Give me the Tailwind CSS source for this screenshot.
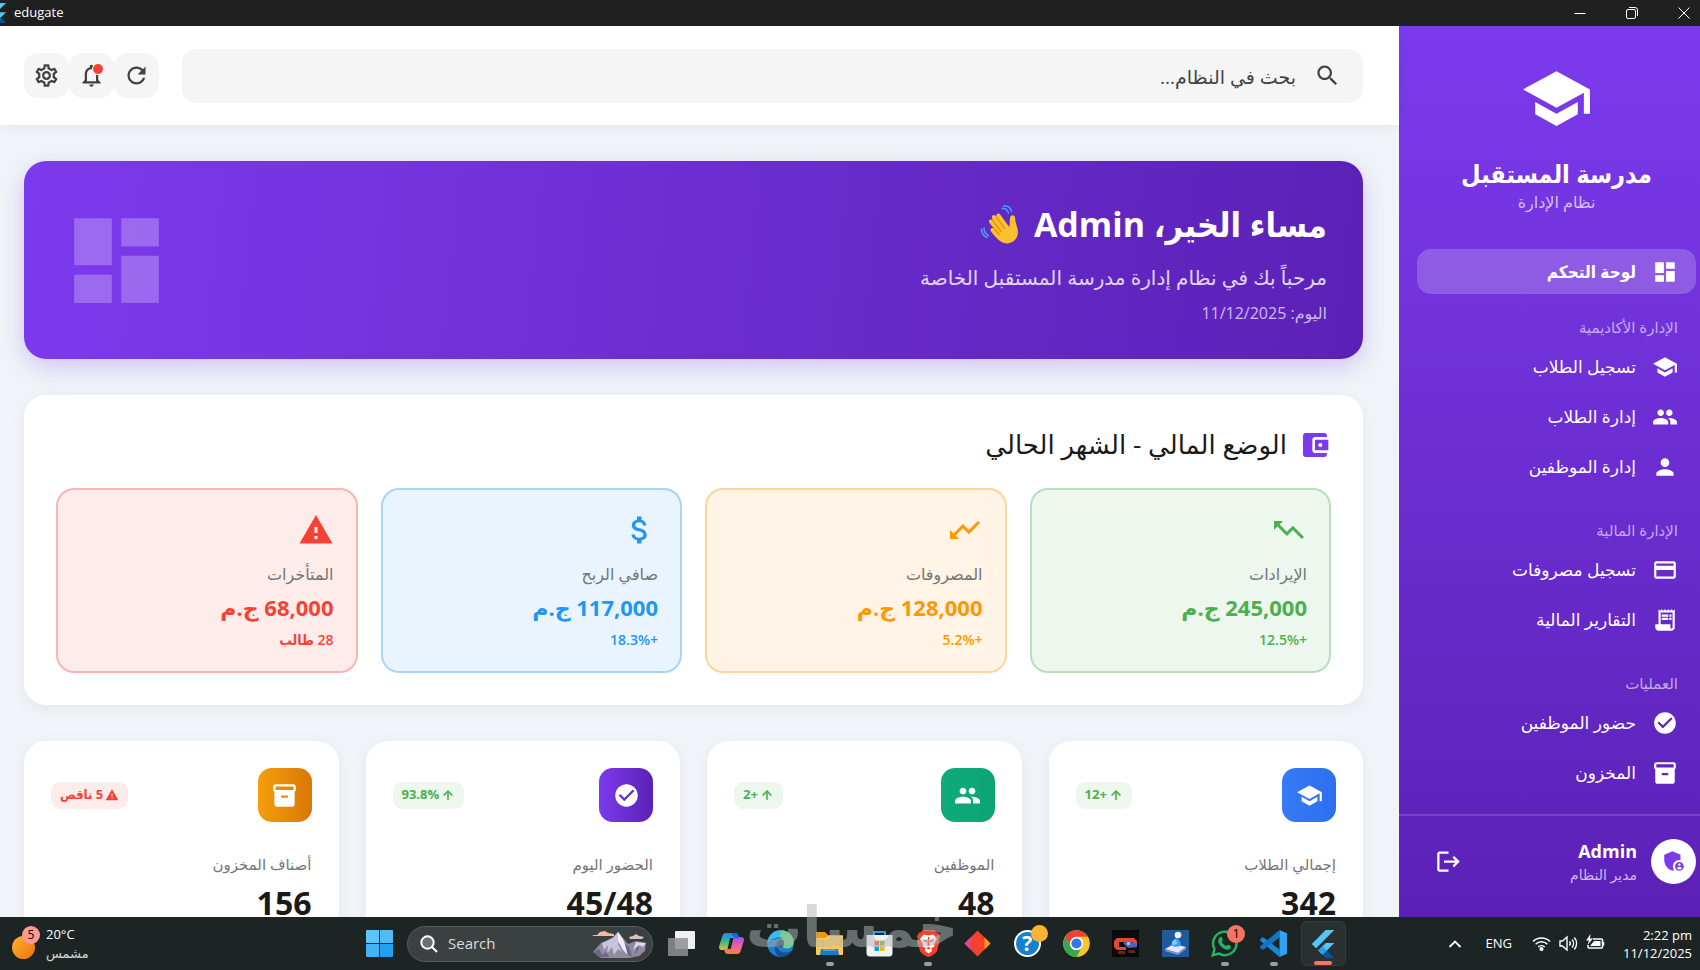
<!doctype html>
<html lang="ar" dir="rtl">
    <head>
        <meta charset="UTF-8" />
        <meta name="viewport" content="width=device-width, initial-scale=1.0" />
        <title>edugate</title>
        <script src="https://cdn.jsdelivr.net/npm/@tailwindcss/browser@4"></script>
    </head>
    <body class="font-['Open_Sans','DejaVu_Sans',sans-serif] text-[#1a1a1a]">
        <!-- icon set -->
        <svg class="hidden">
            <symbol id="school" viewBox="0 0 24 24"><path d="M5 13.18v4L12 21l7-3.82v-4L12 17l-7-3.82zM12 3L1 9l11 6 9-4.91V17h2V9L12 3z" /></symbol>
            <symbol id="dashboard" viewBox="0 0 24 24"><path d="M3 13h8V3H3v10zm0 8h8v-6H3v6zm10 0h8V11h-8v10zm0-18v6h8V3h-8z" /></symbol>
            <symbol id="people" viewBox="0 0 24 24"><path d="M16 11c1.66 0 2.99-1.34 2.99-3S17.66 5 16 5c-1.66 0-3 1.34-3 3s1.34 3 3 3zm-8 0c1.66 0 2.99-1.34 2.99-3S9.66 5 8 5C6.34 5 5 6.34 5 8s1.34 3 3 3zm0 2c-2.33 0-7 1.17-7 3.5V19h14v-2.5c0-2.33-4.67-3.5-7-3.5zm8 0c-.29 0-.62.02-.97.05 1.16.84 1.97 1.97 1.97 3.45V19h6v-2.5c0-2.33-4.67-3.5-7-3.5z" /></symbol>
            <symbol id="person" viewBox="0 0 24 24"><path d="M12 12c2.21 0 4-1.79 4-4s-1.79-4-4-4-4 1.79-4 4 1.79 4 4 4zm0 2c-2.67 0-8 1.34-8 4v2h16v-2c0-2.66-5.33-4-8-4z" /></symbol>
            <symbol id="card" viewBox="0 0 24 24"><path d="M20 4H4c-1.11 0-1.99.89-1.99 2L2 18c0 1.11.89 2 2 2h16c1.11 0 2-.89 2-2V6c0-1.11-.89-2-2-2zm0 14H4v-6h16v6zm0-10H4V6h16v2z" /></symbol>
            <symbol id="receipt" viewBox="0 0 24 24"><path d="M19.5 3.5L18 2l-1.5 1.5L15 2l-1.5 1.5L12 2l-1.5 1.5L9 2 7.5 3.5 6 2v14H3v3c0 1.66 1.34 3 3 3h12c1.66 0 3-1.34 3-3V2l-1.5 1.5zM19 19c0 .55-.45 1-1 1s-1-.45-1-1v-3H8V5h11v14zM9 7h6v2H9zM16 7h2v2h-2zM9 10h6v2H9zM16 10h2v2h-2z" /></symbol>
            <symbol id="check" viewBox="0 0 24 24"><path d="M12 2C6.48 2 2 6.48 2 12s4.48 10 10 10 10-4.48 10-10S17.52 2 12 2zm-2 15l-5-5 1.41-1.41L10 14.17l7.59-7.59L19 8l-9 9z" /></symbol>
            <symbol id="inventory" viewBox="0 0 24 24"><path d="M20 2H4c-1 0-2 .9-2 2v3.01c0 .72.43 1.34 1 1.69V20c0 1.1 1.1 2 2 2h14c.9 0 2-.9 2-2V8.7c.57-.35 1-.97 1-1.69V4c0-1.1-1-2-2-2zm-5 12H9v-2h6v2zm5-7H4V4h16v3z" /></symbol>
            <symbol id="admin" viewBox="0 0 24 24"><path d="M17 11c.34 0 .67.04 1 .09V6.27L10.5 3 3 6.27v4.91c0 4.54 3.2 8.79 7.5 9.82.55-.13 1.08-.32 1.6-.55-.69-.98-1.1-2.17-1.1-3.45 0-3.31 2.69-6 6-6z" /><path d="M17 13c-2.21 0-4 1.79-4 4s1.79 4 4 4 4-1.79 4-4-1.79-4-4-4zm0 1.38c.62 0 1.12.51 1.12 1.12s-.51 1.12-1.12 1.12-1.12-.51-1.12-1.12.5-1.12 1.12-1.12zm0 5.37c-.93 0-1.74-.46-2.24-1.17.05-.72 1.51-1.08 2.24-1.08s2.19.36 2.24 1.08c-.5.71-1.31 1.17-2.24 1.17z" /></symbol>
            <symbol id="logout" viewBox="0 0 24 24"><path d="M17 7l-1.41 1.41L18.17 11H8v2h10.17l-2.58 2.58L17 17l5-5zM4 5h8V3H4c-1.1 0-2 .9-2 2v14c0 1.1.9 2 2 2h8v-2H4V5z" /></symbol>
            <symbol id="refresh" viewBox="0 0 24 24"><path d="M17.65 6.35C16.2 4.9 14.21 4 12 4c-4.42 0-7.99 3.58-7.99 8s3.57 8 7.99 8c3.73 0 6.84-2.55 7.73-6h-2.08c-.82 2.33-3.04 4-5.65 4-3.31 0-6-2.69-6-6s2.69-6 6-6c1.66 0 3.14.69 4.22 1.78L13 11h7V4l-2.35 2.35z" /></symbol>
            <symbol id="bell" viewBox="0 0 24 24"><path d="M12 22c1.1 0 2-.9 2-2h-4c0 1.1.9 2 2 2zm6-6v-5c0-3.07-1.63-5.64-4.5-6.32V4c0-.83-.67-1.5-1.5-1.5s-1.5.67-1.5 1.5v.68C7.64 5.36 6 7.92 6 11v5l-2 2v1h16v-1l-2-2zm-2 1H8v-6c0-2.48 1.51-4.5 4-4.5s4 2.02 4 4.5v6z" /></symbol>
            <symbol id="settings" viewBox="0 0 24 24"><path d="M19.43 12.98c.04-.32.07-.64.07-.98 0-.34-.03-.66-.07-.98l2.11-1.65c.19-.15.24-.42.12-.64l-2-3.46c-.09-.16-.26-.25-.44-.25-.06 0-.12.01-.17.03l-2.49 1c-.52-.4-1.08-.73-1.69-.98l-.38-2.65C14.46 2.18 14.25 2 14 2h-4c-.25 0-.46.18-.49.42l-.38 2.65c-.61.25-1.17.59-1.69.98l-2.49-1c-.06-.02-.12-.03-.18-.03-.17 0-.34.09-.43.25l-2 3.46c-.13.22-.07.49.12.64l2.11 1.65c-.04.32-.07.65-.07.98 0 .33.03.66.07.98l-2.11 1.65c-.19.15-.24.42-.12.64l2 3.46c.09.16.26.25.44.25.06 0 .12-.01.17-.03l2.49-1c.52.4 1.08.73 1.69.98l.38 2.65c.03.24.24.42.49.42h4c.25 0 .46-.18.49-.42l.38-2.65c.61-.25 1.17-.59 1.69-.98l2.49 1c.06.02.12.03.18.03.17 0 .34-.09.43-.25l2-3.46c.12-.22.07-.49-.12-.64l-2.11-1.65zm-1.98-1.71c.04.31.05.52.05.73 0 .21-.02.43-.05.73l-.14 1.13.89.7 1.08.84-.7 1.21-1.27-.51-1.04-.42-.9.68c-.43.32-.84.56-1.25.73l-1.06.43-.16 1.13-.2 1.35h-1.4l-.19-1.35-.16-1.13-1.06-.43c-.43-.18-.83-.41-1.23-.71l-.91-.7-1.06.43-1.27.51-.7-1.21 1.08-.84.89-.7-.14-1.13c-.03-.31-.05-.54-.05-.74s.02-.43.05-.73l.14-1.13-.89-.7-1.08-.84.7-1.21 1.27.51 1.04.42.9-.68c.43-.32.84-.56 1.25-.73l1.06-.43.16-1.13.2-1.35h1.39l.19 1.35.16 1.13 1.06.43c.43.18.83.41 1.23.71l.91.7 1.06-.43 1.27-.51.7 1.21-1.07.85-.89.7.14 1.13zM12 8c-2.21 0-4 1.79-4 4s1.79 4 4 4 4-1.79 4-4-1.79-4-4-4zm0 6c-1.1 0-2-.9-2-2s.9-2 2-2 2 .9 2 2-.9 2-2 2z" /></symbol>
            <symbol id="search" viewBox="0 0 24 24"><path d="M15.5 14h-.79l-.28-.27C15.41 12.59 16 11.11 16 9.5 16 5.91 13.09 3 9.5 3S3 5.91 3 9.5 5.91 16 9.5 16c1.61 0 3.09-.59 4.23-1.57l.27.28v.79l5 4.99L20.49 19l-4.99-5zm-6 0C7.01 14 5 11.99 5 9.5S7.01 5 9.5 5 14 7.01 14 9.5 11.99 14 9.5 14z" /></symbol>
            <symbol id="wallet" viewBox="0 0 24 24"><path d="M21 18v1c0 1.1-.9 2-2 2H5c-1.11 0-2-.9-2-2V5c0-1.1.89-2 2-2h14c1.1 0 2 .9 2 2v1h-9c-1.11 0-2 .9-2 2v8c0 1.1.89 2 2 2h9zm-9-2h10V8H12v8zm4-2.5c-.83 0-1.5-.67-1.5-1.5s.67-1.5 1.5-1.5 1.5.67 1.5 1.5-.67 1.5-1.5 1.5z" /></symbol>
            <symbol id="trend-up" viewBox="0 0 24 24"><path transform="matrix(-1 0 0 1 24 0)" d="M16 6l2.29 2.29-4.88 4.88-4-4L2 16.59 3.41 18l6-6 4 4 6.3-6.29L22 12V6z" /></symbol>
            <symbol id="trend-down" viewBox="0 0 24 24"><path transform="matrix(-1 0 0 1 24 0)" d="M16 18l2.29-2.29-4.88-4.88-4 4L2 7.41 3.41 6l6 6 4-4 6.3 6.29L22 12v6z" /></symbol>
            <symbol id="money" viewBox="0 0 24 24"><path d="M11.8 10.9c-2.27-.59-3-1.2-3-2.15 0-1.09 1.01-1.85 2.7-1.85 1.78 0 2.44.85 2.5 2.1h2.21c-.07-1.72-1.12-3.3-3.21-3.81V3h-3v2.16c-1.94.42-3.5 1.68-3.5 3.61 0 2.31 1.91 3.46 4.7 4.13 2.5.6 3 1.48 3 2.41 0 .69-.49 1.79-2.7 1.79-2.06 0-2.87-.92-2.98-2.1h-2.2c.12 2.19 1.76 3.42 3.68 3.83V21h3v-2.15c1.95-.37 3.5-1.5 3.5-3.55 0-2.84-2.43-3.81-4.7-4.4z" /></symbol>
            <symbol id="warning" viewBox="0 0 24 24"><path d="M1 21h22L12 2 1 21zm12-3h-2v-2h2v2zm0-4h-2v-4h2v4z" /></symbol>
            <symbol id="arrow-up" viewBox="0 0 24 24"><path stroke="currentColor" d="M4 12l1.41 1.41L11 7.83V20h2V7.83l5.58 5.59L20 12l-8-8-8 8z" /></symbol>
            <symbol id="flutter" viewBox="0 0 24 24">
                <path fill="#54c5f8" d="M14.3 0L2.4 12l3.7 3.7L21.7 0z" />
                <path fill="#54c5f8" d="M14.4 11.1L7.9 17.5l3.7 3.7 10.1-10.1z" />
                <path fill="#01579b" d="M11.6 21.2l2.8 2.8h7.3l-6.5-6.5z" />
                <path fill="#2b9ee8" d="M7.9 17.5l3.7-3.7 3.6 3.7-3.6 3.7z" />
            </symbol>
        </svg>

        <div class="relative flex h-screen flex-col overflow-hidden">
            <!-- title bar -->
            <div dir="ltr" class="flex h-[26px] shrink-0 items-center bg-[#202020] text-white">
                <svg class="-ml-3 size-5"><use href="#flutter" /></svg>
                <span class="ml-1.5 text-[13px]">edugate</span>
                <div class="ml-auto flex gap-5">
                    <button type="button" aria-label="Minimize" class="flex h-[26px] w-8 items-center justify-center">
                        <svg class="size-3 fill-none stroke-white" viewBox="0 0 12 12"><path d="M.5 6.5h11" /></svg>
                    </button>
                    <button type="button" aria-label="Restore" class="flex h-[26px] w-8 items-center justify-center">
                        <svg class="size-3 fill-none stroke-white" viewBox="0 0 12 12"><rect x=".5" y="2.5" width="9" height="9" rx="1.5" /><path d="M3 .5h6a2.5 2.5 0 0 1 2.500 2.500v6" /></svg>
                    </button>
                    <button type="button" aria-label="Close" class="flex h-[26px] w-8 items-center justify-center">
                        <svg class="size-3 fill-none stroke-white" viewBox="0 0 12 12"><path d="M.5 .5l11 11M11.500 .5l-11 11" /></svg>
                    </button>
                </div>
            </div>

            <div class="flex min-h-0 flex-1">
                <!-- sidebar -->
                <aside class="flex w-[301px] shrink-0 flex-col bg-linear-to-b from-[#7c3aed] to-[#5b21b6] text-white">
                    <div class="flex flex-col items-center pt-9 pr-1 pb-9 pl-[18px]">
                        <svg class="size-[73px] fill-white"><use href="#school" /></svg>
                        <h1 class="mt-5 font-['Open_Sans','DejaVu_Sans_Condensed','DejaVu_Sans',sans-serif] text-[25px] leading-9 font-bold">مدرسة المستقبل</h1>
                        <p class="text-[16px] leading-[22px] text-white/70">نظام الإدارة</p>
                    </div>
                    <nav class="flex min-h-0 flex-1 flex-col overflow-hidden pr-1 pl-[18px]">
                        <a href="#" class="flex h-[45px] shrink-0 items-center gap-4 rounded-[14px] bg-white/20 px-[18px] font-['Open_Sans','DejaVu_Sans_Condensed','DejaVu_Sans',sans-serif] text-[17px] font-bold">
                            <svg class="size-[26px] fill-white"><use href="#dashboard" /></svg>
                            لوحة التحكم
                        </a>
                        <h2 class="mt-[23px] mb-[7px] px-[18px] text-[15px] leading-5 text-white/60">الإدارة الأكاديمية</h2>
                        <div class="flex flex-col gap-[5px] text-[17px]">
                            <a href="#" class="flex h-[45px] items-center gap-4 px-[18px]">
                                <svg class="size-[26px] fill-white"><use href="#school" /></svg>
                                تسجيل الطلاب
                            </a>
                            <a href="#" class="flex h-[45px] items-center gap-4 px-[18px]">
                                <svg class="size-[26px] fill-white"><use href="#people" /></svg>
                                إدارة الطلاب
                            </a>
                            <a href="#" class="flex h-[45px] items-center gap-4 px-[18px]">
                                <svg class="size-[26px] fill-white"><use href="#person" /></svg>
                                إدارة الموظفين
                            </a>
                        </div>
                        <h2 class="mt-[31px] mb-[7px] px-[18px] text-[15px] leading-5 text-white/60">الإدارة المالية</h2>
                        <div class="flex flex-col gap-[5px] text-[17px]">
                            <a href="#" class="flex h-[45px] items-center gap-4 px-[18px]">
                                <svg class="size-[26px] fill-white"><use href="#card" /></svg>
                                تسجيل مصروفات
                            </a>
                            <a href="#" class="flex h-[45px] items-center gap-4 px-[18px]">
                                <svg class="size-[26px] fill-white"><use href="#receipt" /></svg>
                                التقارير المالية
                            </a>
                        </div>
                        <h2 class="mt-[31px] mb-[7px] px-[18px] text-[15px] leading-5 text-white/60">العمليات</h2>
                        <div class="flex flex-col gap-[5px] text-[17px]">
                            <a href="#" class="flex h-[45px] items-center gap-4 px-[18px]">
                                <svg class="size-[26px] fill-white"><use href="#check" /></svg>
                                حضور الموظفين
                            </a>
                            <a href="#" class="flex h-[45px] items-center gap-4 px-[18px]">
                                <svg class="size-[26px] fill-white"><use href="#inventory" /></svg>
                                المخزون
                            </a>
                        </div>
                    </nav>
                    <div class="flex items-center gap-3.5 border-t-2 border-white/15 pt-[21px] pr-1 pb-8 pl-9">
                        <div class="flex size-[45px] items-center justify-center rounded-full bg-white">
                            <svg class="size-[26px] fill-[#7c3aed]"><use href="#admin" /></svg>
                        </div>
                        <div class="pt-1">
                            <p class="text-[18px] leading-5 font-bold">Admin</p>
                            <p class="mt-1 text-[14px] leading-5 text-white/70">مدير النظام</p>
                        </div>
                        <button type="button" aria-label="تسجيل الخروج" class="mr-auto">
                            <svg class="size-[27px] fill-white"><use href="#logout" /></svg>
                        </button>
                    </div>
                </aside>

                <div class="flex min-w-0 flex-1 flex-col bg-[#f0f4f8]">
                    <!-- top bar -->
                    <header class="z-10 flex h-[99px] shrink-0 items-center gap-[23px] bg-white pr-9 pl-6 shadow-[0_2px_12px_rgba(0,0,0,0.05)]">
                        <label class="flex h-[54px] flex-1 items-center gap-[18px] rounded-[14px] bg-[#f5f5f5] px-[22px]">
                            <svg class="size-[27px] fill-[#424242]"><use href="#search" /></svg>
                            <input type="text" placeholder="بحث في النظام..." aria-label="بحث" class="min-w-0 flex-1 pt-1 text-[19px] outline-none placeholder:text-[#424242]" />
                        </label>
                        <div class="flex">
                            <button type="button" aria-label="تحديث" class="flex size-[45px] items-center justify-center rounded-[14px] bg-[#f5f5f5]">
                                <svg class="size-[27px] fill-[#424242]"><use href="#refresh" /></svg>
                            </button>
                            <button type="button" aria-label="الإشعارات" class="relative flex size-[45px] items-center justify-center rounded-[14px] bg-[#f5f5f5]">
                                <svg class="size-[27px] fill-[#424242]"><use href="#bell" /></svg>
                                <span class="absolute top-2.5 right-2.5 size-3 rounded-full border border-white bg-[#f44336]"></span>
                            </button>
                            <button type="button" aria-label="الإعدادات" class="flex size-[45px] items-center justify-center rounded-[14px] bg-[#f5f5f5]">
                                <svg class="size-[27px] fill-[#424242]"><use href="#settings" /></svg>
                            </button>
                        </div>
                    </header>

                    <main class="flex min-h-0 flex-1 flex-col gap-9 overflow-hidden pt-9 pr-9 pl-6">
                        <!-- greeting -->
                        <section class="flex shrink-0 items-center justify-between rounded-[22px] bg-linear-[96deg] from-[#7c3aed] to-[#5b21b6] p-9 text-white shadow-[0_8px_24px_rgba(124,58,237,0.25)]">
                            <div>
                                <h2 class="flex items-center gap-3.5 font-['Open_Sans','DejaVu_Sans_Condensed','DejaVu_Sans',sans-serif] text-[34px] leading-[54px] font-bold">
                                    مساء الخير، Admin
                                    <svg class="size-10" viewBox="0 0 40 40" role="img" aria-label="👋">
                                        <g fill="none" stroke="#42a5f5" stroke-width="1.500" stroke-linecap="round">
                                            <path d="M22 4.500c3-.5 5.500 1.200 6.500 4.500M23.500 1.900c4-.3 7 2 8 5.500M4 24c0 4 1.500 6 4.500 7.500M1.500 25c.2 4 2 7 5.500 8.500" />
                                        </g>
                                        <path fill="#fbc02d" d="M11.500 28c-2.500-2.500.5-5.500 3-3l-5-6c-1.700-2.800 1.600-4.800 3.400-2.500l-.8-2.300c-1-2.800 2-4.500 3.700-2.200l.6.800c-.8-3.200 2.400-4.500 3.900-2l9 12.200c.6-3 .2-5.500.8-9.500.6-3.300 5-2.800 5 .5-.1 5 2.800 9 2.800 14 0 7-5 11.400-11.500 11.400-6 0-11-6.500-14.900-11.400z" />
                                        <path fill="none" stroke="#ef8f00" stroke-width="1.300" stroke-linecap="round" d="M14.500 25l4.500 5.500M13 17l8 10.500M16.500 13l8 11.500" />
                                    </svg>
                                </h2>
                                <p class="mt-[9px] text-[20px] leading-9 text-white/80">مرحباً بك في نظام إدارة مدرسة المستقبل الخاصة</p>
                                <p class="mt-[7px] text-[16px] leading-5 text-white/70">اليوم: 11/12/2025</p>
                            </div>
                            <svg class="size-[113px] fill-white/25"><use href="#dashboard" /></svg>
                        </section>

                        <!-- finance -->
                        <section class="shrink-0 rounded-[22px] bg-white p-8 shadow-[0_4px_16px_rgba(0,0,0,0.05)]">
                            <h2 class="mb-[26px] flex h-[35px] items-center gap-3 text-[26px] font-medium">
                                <svg class="size-8 fill-[#7c3aed]"><use href="#wallet" /></svg>
                                الوضع المالي - الشهر الحالي
                            </h2>
                            <div class="grid grid-cols-4 gap-[23px]">
                                <div class="rounded-[18px] border-2 border-[#4caf50]/40 bg-[#edf7ee] bg-clip-padding p-[22px] text-[#4caf50]">
                                    <svg class="size-9 fill-[#4caf50]"><use href="#trend-up" /></svg>
                                    <p class="mt-[15px] text-[16px] leading-[22px] text-[#757575]">الإيرادات</p>
                                    <p class="mt-[7px] text-[22px] leading-[30px] font-bold">245,000 ج.م</p>
                                    <p class="mt-[9px] font-['Open_Sans','DejaVu_Sans_Condensed','DejaVu_Sans',sans-serif] text-[14px] leading-[18px] font-semibold">+12.5%</p>
                                </div>
                                <div class="rounded-[18px] border-2 border-[#ff9800]/40 bg-[#fff4e5] bg-clip-padding p-[22px] text-[#ff9800]">
                                    <svg class="size-9 fill-[#ff9800]"><use href="#trend-down" /></svg>
                                    <p class="mt-[15px] text-[16px] leading-[22px] text-[#757575]">المصروفات</p>
                                    <p class="mt-[7px] text-[22px] leading-[30px] font-bold">128,000 ج.م</p>
                                    <p class="mt-[9px] font-['Open_Sans','DejaVu_Sans_Condensed','DejaVu_Sans',sans-serif] text-[14px] leading-[18px] font-semibold">+5.2%</p>
                                </div>
                                <div class="rounded-[18px] border-2 border-[#2196f3]/40 bg-[#e9f4fe] bg-clip-padding p-[22px] text-[#2196f3]">
                                    <svg class="size-9 fill-[#2196f3]"><use href="#money" /></svg>
                                    <p class="mt-[15px] text-[16px] leading-[22px] text-[#757575]">صافي الربح</p>
                                    <p class="mt-[7px] text-[22px] leading-[30px] font-bold">117,000 ج.م</p>
                                    <p class="mt-[9px] font-['Open_Sans','DejaVu_Sans_Condensed','DejaVu_Sans',sans-serif] text-[14px] leading-[18px] font-semibold">+18.3%</p>
                                </div>
                                <div class="rounded-[18px] border-2 border-[#f44336]/40 bg-[#feeceb] bg-clip-padding p-[22px] text-[#f44336]">
                                    <svg class="size-9 fill-[#f44336]"><use href="#warning" /></svg>
                                    <p class="mt-[15px] text-[16px] leading-[22px] text-[#757575]">المتأخرات</p>
                                    <p class="mt-[7px] text-[22px] leading-[30px] font-bold">68,000 ج.م</p>
                                    <p class="mt-[9px] font-['Open_Sans','DejaVu_Sans_Condensed','DejaVu_Sans',sans-serif] text-[14px] leading-[18px] font-semibold">28 طالب</p>
                                </div>
                            </div>
                        </section>

                        <!-- counters -->
                        <section class="grid shrink-0 grid-cols-4 gap-[27px]">
                            <div class="rounded-[22px] bg-white p-[27px] shadow-[0_4px_16px_rgba(0,0,0,0.05)]">
                                <div class="flex items-center justify-between">
                                    <div class="flex size-[54px] items-center justify-center rounded-[14px] bg-linear-to-r from-[#367af5] to-[#2d6ef0]">
                                        <svg class="size-[27px] fill-white"><use href="#school" /></svg>
                                    </div>
                                    <span class="flex h-[27px] items-center gap-0.5 rounded-[9px] bg-[#edf7ee] px-[9px] text-[13px] font-bold text-[#4caf50]">
                                        <svg class="size-3.5 fill-[#4caf50]"><use href="#arrow-up" /></svg>
                                        +12
                                    </span>
                                </div>
                                <p class="mt-[31px] text-[15px] leading-[22px] text-[#757575]">إجمالي الطلاب</p>
                                <p class="mt-2 text-[32px] leading-10 font-bold">342</p>
                            </div>
                            <div class="rounded-[22px] bg-white p-[27px] shadow-[0_4px_16px_rgba(0,0,0,0.05)]">
                                <div class="flex items-center justify-between">
                                    <div class="flex size-[54px] items-center justify-center rounded-[14px] bg-linear-to-r from-[#10ab79] to-[#0ca472]">
                                        <svg class="size-[27px] fill-white"><use href="#people" /></svg>
                                    </div>
                                    <span class="flex h-[27px] items-center gap-0.5 rounded-[9px] bg-[#edf7ee] px-[9px] text-[13px] font-bold text-[#4caf50]">
                                        <svg class="size-3.5 fill-[#4caf50]"><use href="#arrow-up" /></svg>
                                        +2
                                    </span>
                                </div>
                                <p class="mt-[31px] text-[15px] leading-[22px] text-[#757575]">الموظفين</p>
                                <p class="mt-2 text-[32px] leading-10 font-bold">48</p>
                            </div>
                            <div class="rounded-[22px] bg-white p-[27px] shadow-[0_4px_16px_rgba(0,0,0,0.05)]">
                                <div class="flex items-center justify-between">
                                    <div class="flex size-[54px] items-center justify-center rounded-[14px] bg-linear-to-r from-[#7c3aed] to-[#5b21b6]">
                                        <svg class="size-[27px] fill-white"><use href="#check" /></svg>
                                    </div>
                                    <span class="flex h-[27px] items-center gap-0.5 rounded-[9px] bg-[#edf7ee] px-[9px] text-[13px] font-bold text-[#4caf50]">
                                        <svg class="size-3.5 fill-[#4caf50]"><use href="#arrow-up" /></svg>
                                        93.8%
                                    </span>
                                </div>
                                <p class="mt-[31px] text-[15px] leading-[22px] text-[#757575]">الحضور اليوم</p>
                                <p class="mt-2 text-[32px] leading-10 font-bold">45/48</p>
                            </div>
                            <div class="rounded-[22px] bg-white p-[27px] shadow-[0_4px_16px_rgba(0,0,0,0.05)]">
                                <div class="flex items-center justify-between">
                                    <div class="flex size-[54px] items-center justify-center rounded-[14px] bg-linear-to-r from-[#f59e0b] to-[#d97706]">
                                        <svg class="size-[27px] fill-white"><use href="#inventory" /></svg>
                                    </div>
                                    <span class="flex h-[27px] items-center gap-0.5 rounded-[9px] bg-[#feeceb] px-[9px] font-['Open_Sans','DejaVu_Sans_Condensed','DejaVu_Sans',sans-serif] text-[13px] font-bold text-[#f44336]">
                                        <svg class="size-3.5 fill-[#f44336]"><use href="#warning" /></svg>
                                        5 ناقص
                                    </span>
                                </div>
                                <p class="mt-[31px] text-[15px] leading-[22px] text-[#757575]">أصناف المخزون</p>
                                <p class="mt-2 text-[32px] leading-10 font-bold">156</p>
                            </div>
                        </section>
                    </main>
                </div>
            </div>

            <!-- taskbar -->
            <footer dir="ltr" class="z-10 flex h-[53px] shrink-0 items-center bg-[#1c2424] text-white">
                <div class="flex flex-1 items-center gap-2.5 pl-3">
                    <div class="relative size-6">
                        <div class="mt-1 size-[23px] rounded-full bg-linear-to-br from-[#ffb52e] to-[#e8700c]"></div>
                        <span class="absolute -top-1.5 left-2.5 flex size-[18px] items-center justify-center rounded-full bg-[#ff9a92] text-[12px] text-black">5</span>
                    </div>
                    <div class="text-[13px] leading-[19px]">
                        <p>20°C</p>
                        <p class="text-white/80">مشمس</p>
                    </div>
                </div>

                <div class="mr-1 flex w-[996px] shrink-0 items-center">
                    <button type="button" aria-label="Start" class="flex w-[55px] justify-center">
                        <svg class="size-[27px]" viewBox="0 0 27 27">
                            <path fill="#5cc5fb" d="M1 0h12v13H0V1a1 1 0 0 1 1-1z" />
                            <path fill="#4fbcf8" d="M14 0h12a1 1 0 0 1 1 1v12H14z" />
                            <path fill="#42b2f5" d="M0 14h13v13H1a1 1 0 0 1-1-1z" />
                            <path fill="#239ff0" d="M14 14h13v12a1 1 0 0 1-1 1H14z" />
                        </svg>
                    </button>
                    <label class="flex h-9 w-[246px] items-center gap-2.5 rounded-full border border-[#565c5c] bg-[#3b4141] pr-1 pl-3">
                        <svg class="size-[18px] shrink-0 fill-none stroke-white" viewBox="0 0 18 18" stroke-width="2"><circle cx="7.500" cy="7.500" r="6.200" fill="#6b7070" /><path d="M12 12l5 5" /></svg>
                        <input type="text" placeholder="Search" aria-label="Search" class="w-[120px] min-w-0 text-[15px] outline-none placeholder:text-[#dcdede]" />
                        <svg class="ml-auto h-7 w-14 shrink-0" viewBox="0 0 56 28">
                            <path fill="#8f8ba0" d="M1 22l8-9 5-2 7-4 5-5 5 6 5 6 8-3 10 2-1 8-6 5-10 2H9z" />
                            <path fill="#c9c3dd" d="M10 13l11-5 5-6 3 4-3 8 4 8-4-3-4 6-2-8-5 7 1-9-4 5z" />
                            <path fill="#f1eefa" d="M26 2l5 7 6 17-6-6-5-9z" />
                            <path fill="#6c6886" d="M1 22l6-3 3 6 5-3 2 5H7zM33 14l4 3 3 9h-4zM45 14l2 4-4 7z" />
                            <path fill="#dcd7ea" d="M44 12l10 1-3 4-4-2-6 5z" />
                            <path fill="#f3b9a6" d="M0 5h5l3-3 5-1 3 2 6 1v2H2z" />
                            <path fill="#d9c4c4" d="M37 7l4-1 3-2 3 2 5 1-2 2H38z" />
                        </svg>
                    </label>

                    <div class="ml-1 grid flex-1 grid-cols-14">
                        <button type="button" aria-label="Task view" class="flex h-[45px] items-center justify-center">
                            <svg class="size-[27px]" viewBox="0 0 27 27"><rect x="7" y="1" width="20" height="18" rx="1" fill="#f0f0f0" /><rect x="0" y="8" width="20" height="18" rx="1" fill="#8d9090" fill-opacity=".85" /></svg>
                        </button>
                        <button type="button" aria-label="Copilot" class="flex h-[45px] items-center justify-center">
                            <svg class="size-[27px]" viewBox="0 0 27 27">
                                <defs>
                                    <linearGradient id="cp1" x1="0" y1="0" x2="0" y2="1"><stop offset="0" stop-color="#1e88f5" /><stop offset=".5" stop-color="#35b98f" /><stop offset="1" stop-color="#f5b82e" /></linearGradient>
                                    <linearGradient id="cp2" x1="0" y1="0" x2="0" y2="1"><stop offset="0" stop-color="#a052f0" /><stop offset=".5" stop-color="#ec5fa0" /><stop offset="1" stop-color="#ff7e3e" /></linearGradient>
                                </defs>
                                <path fill="url(#cp1)" d="M8 3h9c2 0 3 1 3.500 3l.5 2h-3c-2 0-3 1-3.500 3l-2 6c-.6 2-2 3-4 3H4c-2.500 0-3.500-2-2.800-4L4 7c.7-2.500 2-4 4-4z" />
                                <path fill="url(#cp2)" d="M19 24h-9c-2 0-3-1-3.500-3L6 19h3c2 0 3-1 3.500-3l2-6c.6-2 2-3 4-3H23c2.500 0 3.500 2 2.800 4L23 20c-.7 2.500-2 4-4 4z" />
                                <path fill="#1c2424" d="M12 8h3.500l-2.800 11H9.500z" />
                                <path fill="#1565d8" d="M13 3h4c2 0 3 1 3.500 3l.5 2h-4.500z" />
                            </svg>
                        </button>
                        <button type="button" aria-label="Edge" class="flex h-[45px] items-center justify-center">
                            <svg class="size-[27px]" viewBox="0 0 27 27">
                                <circle cx="13.500" cy="13.500" r="13.300" fill="#1b7fd0" />
                                <path fill="#43b6ea" d="M.5 12C1.500 5 7 .3 13.500.3c7.500 0 13 5.200 13.200 11.700-5-6.500-18-7-26.200 0z" />
                                <path fill="#6fd08b" d="M15 .3c7 .7 11.700 6 11.700 11.700 0 4-3 6.500-6.700 6.500-3 0-5-1-4-2.500 2.500-3.500 1-8-4-9.500z" />
                                <path fill="#15508f" d="M10 12c-1.500 5 2 10.500 8 10.500 3 0 5.500-1 7-2-2.500 4-6.500 6.400-11.500 6.400-5-1.500-8-8-3.500-14.900z" />
                                <circle cx="13.500" cy="13.500" r="3.400" fill="#1b3f52" />
                            </svg>
                        </button>
                        <button type="button" aria-label="Explorer" class="relative flex h-[45px] items-center justify-center">
                            <svg class="size-[27px]" viewBox="0 0 27 27">
                                <path fill="#e79a1c" d="M0 3a1 1 0 0 1 1-1h8l3 3h14a1 1 0 0 1 1 1v5H0z" />
                                <path fill="#fccb54" d="M0 8h9l3-2h15v18a1 1 0 0 1-1 1H1a1 1 0 0 1-1-1z" />
                                <path fill="#1b79c9" d="M5 19h17l1 6H4z" /><path fill="#3fa2e8" d="M7 19h13v2H7z" />
                            </svg>
                            <span class="absolute bottom-0 h-1 w-2 rounded-full bg-[#9b9fa0]"></span>
                        </button>
                        <button type="button" aria-label="Store" class="flex h-[45px] items-center justify-center">
                            <svg class="size-[27px]" viewBox="0 0 27 27">
                                <path fill="none" stroke="#2f9de8" stroke-width="2" d="M8 6V2h11v4" />
                                <path fill="#f2f2f2" d="M.5 5h26v18a3.500 3.500 0 0 1-3.500 3.500H4A3.500 3.500 0 0 1 .5 23z" />
                                <path fill="#f25022" d="M8.500 11h4.500v4.500H8.500z" /><path fill="#7fba00" d="M14 11h4.500v4.500H14z" />
                                <path fill="#00a4ef" d="M8.500 16.500h4.500V21H8.500z" /><path fill="#ffb900" d="M14 16.500h4.500V21H14z" />
                            </svg>
                        </button>
                        <button type="button" aria-label="Brave" class="relative flex h-[45px] items-center justify-center">
                            <svg class="size-[27px]" viewBox="0 0 27 27">
                                <path fill="#f5402c" d="M8 0h11l2.500 2.500L23 2.500l2 4-1 3 .5 2-2.500 9.500c-.5 1.500-5.500 5.500-8.500 6-3-.5-8-4.500-8.500-6l-2.500-9.500.5-2-1-3 2-4 1.500 0z" />
                                <path fill="#fff" d="M8.500 4.500l5 1 5-1 3.500 4.500-3 5 .5 2.500-3 1.500.5 3-3.500 2.500-3.500-2.500.5-3-3-1.500.5-2.500-3-5z" />
                                <path fill="#f5402c" d="M8 9.500l4 1v2L8.500 11zM19 9.500l-4 1v2l3.500-1.500zM12.900 7h1.200l.6 8-1.200 1-1.200-1zM11 18l2.500-1 2.500 1-2.500 1.500z" />
                            </svg>
                            <span class="absolute bottom-0 h-1 w-2 rounded-full bg-[#9b9fa0]"></span>
                        </button>
                        <button type="button" aria-label="AnyDesk" class="flex h-[45px] items-center justify-center">
                            <svg class="size-[27px]" viewBox="0 0 27 27"><path fill="#f5402c" d="M13.500.5l13 13-13 13-13-13z" /><path fill="#d9489c" d="M6.500 7.500v12l-6-6z" /><path fill="#f59a16" d="M20.500 7.500v12l6-6z" /></svg>
                        </button>
                        <button type="button" aria-label="Help" class="relative flex h-[45px] items-center justify-center">
                            <span class="flex size-[27px] items-center justify-center rounded-full border-2 border-white bg-[#1681cf] text-[21px] leading-none font-bold">?</span>
                            <span class="absolute top-1 right-1 size-[17px] rounded-full bg-[#fbb331]"></span>
                        </button>
                        <button type="button" aria-label="Chrome" class="flex h-[45px] items-center justify-center">
                            <svg class="size-[27px]" viewBox="0 0 27 27">
                                <circle cx="13.500" cy="13.500" r="13.300" fill="#fbc42d" />
                                <path fill="#ea4335" d="M2 6.800A13.300 13.300 0 0 1 25 6.800H13.500A6.700 6.700 0 0 0 7.700 16.800z" />
                                <path fill="#34a853" d="M2 6.800l5.700 10a6.700 6.700 0 0 0 9.200 2.500l2.300-2.500-5.700 10A13.300 13.300 0 0 1 2 6.800z" />
                                <circle cx="13.500" cy="13.500" r="6.600" fill="#fff" /><circle cx="13.500" cy="13.500" r="5.100" fill="#3478e8" />
                            </svg>
                        </button>
                        <button type="button" aria-label="Camera" class="flex h-[45px] items-center justify-center">
                            <svg class="size-[27px]" viewBox="0 0 27 27">
                                <rect width="27" height="27" fill="#0a0a0c" />
                                <path fill="#e04a35" d="M5 8h17l3 3v4h-4v-3H7v5h7v3H5l-3-3v-6z" />
                                <path fill="#4a62c8" d="M11 13l5-2 9 3v3l-9 1z" /><path fill="#a3c3ec" d="M15 12h3v3h-3z" />
                                <path fill="#5a2a28" d="M6 21h7v3H6zM16 20h6l2 3h-7z" />
                            </svg>
                        </button>
                        <button type="button" aria-label="Studio" class="flex h-[45px] items-center justify-center">
                            <svg class="size-[27px]" viewBox="0 0 27 27">
                                <rect width="27" height="27" fill="#205a9e" />
                                <path fill="#e2e9fa" d="M3 19l9-5 12 3-8 6z" /><path fill="#8f86d8" d="M3 19l13 4v2L3 21zM16 23l8-6v2l-8 6z" />
                                <path fill="#3d9df2" d="M11 10l4-2 3 3 1 5-6 1-4-2z" /><circle cx="16" cy="5" r="3.300" fill="#eef5ff" /><path fill="#7fd0fb" d="M10 12l4-3 1 5-4 1z" />
                            </svg>
                        </button>
                        <button type="button" aria-label="WhatsApp" class="relative flex h-[45px] items-center justify-center">
                            <svg class="size-[27px]" viewBox="0 0 27 27">
                                <path fill="none" stroke="#25b562" stroke-width="2.400" d="M1.800 25.200l1.700-6.200A11.700 11.700 0 1 1 8 23.600z" />
                                <path fill="#25b562" d="M9 7.300c1-.8 1.700-.4 2 .4l.8 2c.2.700-.8 1.500-1 2 .8 2 2.500 3.500 4.500 4.300.6-.2 1.200-1.500 2-1.200l2.300 1.100c.7.5.4 1.600-.2 2.500-1 1.300-3 1.600-4.700 1-3.500-1.100-6-3.600-7.300-6.900-.5-1.800.2-4 1.600-5.200z" />
                            </svg>
                            <span class="absolute top-1 right-1 flex size-[18px] items-center justify-center rounded-full bg-[#f87462] text-[12px] text-black">1</span>
                            <span class="absolute bottom-0 h-1 w-2 rounded-full bg-[#9b9fa0]"></span>
                        </button>
                        <button type="button" aria-label="VS Code" class="relative flex h-[45px] items-center justify-center">
                            <svg class="size-[27px]" viewBox="0 0 27 27">
                                <path fill="#1b86d2" d="M0 9.500L2 7.600l2 .2L19.500 19.500V27L0 10.500z" />
                                <path fill="#1574c0" d="M0 17.500l2 1.900 2-.2L19.500 7.500V0L0 16.500z" />
                                <path fill="#2fa3ef" d="M19.500 0L27 3.200v20.600L19.500 27z" />
                            </svg>
                            <span class="absolute bottom-0 h-1 w-2 rounded-full bg-[#9b9fa0]"></span>
                        </button>
                        <button type="button" aria-label="edugate" class="relative flex h-[45px] w-[45px] items-center justify-center justify-self-center rounded-md border border-[#343c3c] bg-[#283030]">
                            <svg class="size-7"><use href="#flutter" /></svg>
                            <span class="absolute bottom-0 h-1 w-[18px] rounded-full bg-[#f87462]"></span>
                        </button>
                    </div>
                </div>

                <div class="flex flex-1 items-center justify-end gap-2 pr-2">
                    <svg class="mr-4 size-3.5 fill-none stroke-white" viewBox="0 0 14 14" stroke-width="1.800"><path d="M1.500 10L7 4.500l5.500 5.500" /></svg>
                    <span class="mr-3 text-[13px]">ENG</span>
                    <svg class="size-[19px] fill-none stroke-white" viewBox="0 0 19 19" stroke-width="1.500">
                        <path d="M1 7.500a12 12 0 0 1 17 0M3.600 10.300a8.300 8.300 0 0 1 11.800 0M6.200 13a4.700 4.700 0 0 1 6.600 0" /><circle cx="9.500" cy="15" r="1.300" fill="#fff" />
                    </svg>
                    <svg class="size-[19px] fill-none stroke-white" viewBox="0 0 19 19" stroke-width="1.400">
                        <path d="M1 7v5h2.500L8 16V3L3.500 7zM10.500 7.500a3 3 0 0 1 0 4M13 5.500a6 6 0 0 1 0 8M15.300 3.500a9 9 0 0 1 0 12" />
                    </svg>
                    <svg class="size-[19px] fill-none stroke-white" viewBox="0 0 19 19" stroke-width="1.500">
                        <path d="M7 5h8.500a1 1 0 0 1 1 1v7a1 1 0 0 1-1 1H3a1 1 0 0 1-1-1v-2M17.500 8v3.500" /><path fill="#fff" stroke="none" d="M4.500 0L0 6.500h3L1.500 11 7 4.500H4zM8 7h6.500v5H4z" />
                    </svg>
                    <div class="ml-2.5 text-right text-[13px] leading-[18px]">
                        <p>2:22 pm</p>
                        <p>11/12/2025</p>
                    </div>
                </div>
            </footer>

            <!-- watermark across the taskbar edge -->
            <p class="pointer-events-none absolute bottom-3.5 left-[746px] z-20 font-['DejaVu_Sans',sans-serif] text-[56px] leading-[56px] font-bold text-[#b0b5b5]/50">خمسات</p>
        </div>
    </body>
</html>
